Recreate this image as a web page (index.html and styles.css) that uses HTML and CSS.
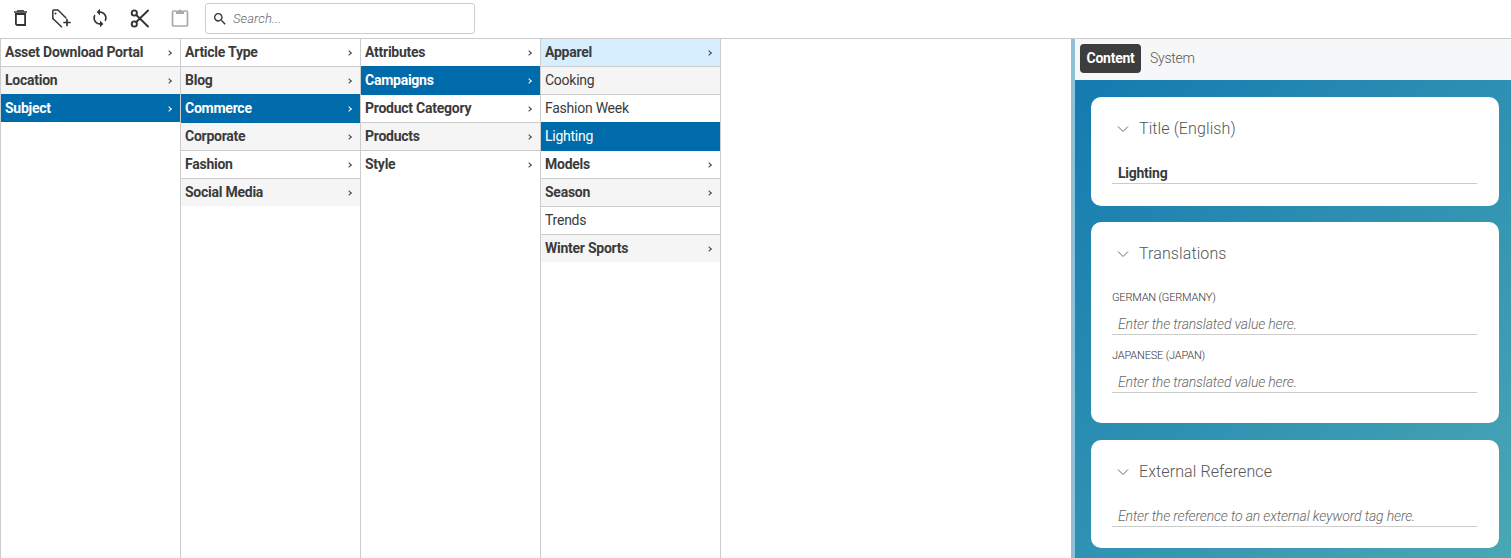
FILE: index.html
```html
<!DOCTYPE html>
<html lang="en">
<head>
<meta charset="utf-8">
<title>Keywords</title>
<link rel="stylesheet" href="styles.css">
</head>
<body>
<div class="app">
  <header class="toolbar">
    <div class="tools">
      <button class="tool"><svg viewBox="0 0 24 24" width="24" height="24" fill="none" stroke="#333" stroke-width="1.800"><path d="M7.900 8h9.200v11H9.400a1.500 1.500 0 0 1-1.500-1.500z"/><path d="M6 6h13" stroke-width="1.500"/><path d="M9 4.800h7" stroke-width="1.300"/></svg></button>
      <button class="tool"><svg viewBox="0 0 24 24" width="24" height="24" fill="none" stroke="#333" stroke-width="1.500" stroke-linejoin="round" stroke-linecap="round"><path d="M4.800 12.500V5a1 1 0 0 1 1-1H10l8 8"/><path d="M4.800 12.500l8.700 8.300"/><circle cx="7.500" cy="7.500" r="1" fill="#333" stroke="none"/><path d="M19 13.500v6M16 16.500h6" stroke-width="1.700"/></svg></button>
      <button class="tool"><svg viewBox="0 0 24 24" width="24" height="24"><path fill="#333" transform="translate(12 12) scale(.84) translate(-12 -12)" d="M12 4V1L8 5l4 4V6c3.300 0 6 2.700 6 6 0 1-.25 2-.7 2.800l1.460 1.460A7.900 7.900 0 0 0 20 12c0-4.420-3.580-8-8-8zm0 14c-3.300 0-6-2.700-6-6 0-1 .25-2 .7-2.800L5.240 7.740A7.900 7.900 0 0 0 4 12c0 4.420 3.580 8 8 8v3l4-4-4-4z"/></svg></button>
      <button class="tool"><svg viewBox="0 0 24 24" width="24" height="24" fill="none" stroke="#333" stroke-width="1.900"><circle cx="6.300" cy="7" r="2.600"/><circle cx="6.300" cy="18" r="2.600"/><path d="M8.300 9 20 20.500M8.300 16 20 4.500" stroke-linecap="round"/></svg></button>
      <button class="tool"><svg viewBox="0 0 24 24" width="24" height="24" fill="none" stroke="#aaa" stroke-width="1.700"><path d="M8 5H5.500a1 1 0 0 0-1 1v13a1 1 0 0 0 1 1h13a1 1 0 0 0 1-1V6a1 1 0 0 0-1-1H16"/><path d="M8 4.500h2.500a1.600 1.600 0 0 1 3 0H16V8H8z" fill="#aaa" stroke="none"/></svg></button>
    </div>
    <label class="search">
      <svg viewBox="0 0 24 24" width="16" height="16"><path fill="#333" d="M15.500 14h-.79l-.28-.27A6.471 6.471 0 0 0 16 9.500 6.500 6.500 0 1 0 9.500 16c1.610 0 3.090-.59 4.230-1.570l.27.28v.79l5 4.990L20.490 19l-4.990-5zm-6 0C7.010 14 5 11.990 5 9.500S7.010 5 9.500 5 14 7.010 14 9.500 11.990 14 9.500 14z"/></svg>
      <input class="search-input" type="text" placeholder="Search...">
    </label>
  </header>
  <main class="main">
    <div class="columns">
      <ul class="col">
        <li class="row parent"><span>Asset Download Portal</span><i class="chev"></i></li>
        <li class="row parent alt"><span>Location</span><i class="chev"></i></li>
        <li class="row parent sel"><span>Subject</span><i class="chev"></i></li>
      </ul>
      <ul class="col">
        <li class="row parent"><span>Article Type</span><i class="chev"></i></li>
        <li class="row parent alt"><span>Blog</span><i class="chev"></i></li>
        <li class="row parent sel"><span>Commerce</span><i class="chev"></i></li>
        <li class="row parent alt"><span>Corporate</span><i class="chev"></i></li>
        <li class="row parent"><span>Fashion</span><i class="chev"></i></li>
        <li class="row parent alt"><span>Social Media</span><i class="chev"></i></li>
      </ul>
      <ul class="col">
        <li class="row parent"><span>Attributes</span><i class="chev"></i></li>
        <li class="row parent sel"><span>Campaigns</span><i class="chev"></i></li>
        <li class="row parent"><span>Product Category</span><i class="chev"></i></li>
        <li class="row parent alt"><span>Products</span><i class="chev"></i></li>
        <li class="row parent"><span>Style</span><i class="chev"></i></li>
      </ul>
      <ul class="col col-last">
        <li class="row parent hl"><span>Apparel</span><i class="chev"></i></li>
        <li class="row alt"><span>Cooking</span></li>
        <li class="row"><span>Fashion Week</span></li>
        <li class="row sel"><span>Lighting</span></li>
        <li class="row parent"><span>Models</span><i class="chev"></i></li>
        <li class="row parent alt"><span>Season</span><i class="chev"></i></li>
        <li class="row"><span>Trends</span></li>
        <li class="row parent alt"><span>Winter Sports</span><i class="chev"></i></li>
      </ul>
    </div>
    <aside class="panel">
      <nav class="tabs">
        <span class="tab active">Content</span>
        <span class="tab">System</span>
      </nav>
      <div class="cards">
        <section class="card card-title">
          <h2 class="card-head"><svg viewBox="0 0 12 8" width="12" height="8" fill="none" stroke="#666" stroke-width="1"><path d="M1 1.500 6 6.500 11 1.500"/></svg>Title (English)</h2>
          <div class="field value">Lighting</div>
        </section>
        <section class="card card-trans">
          <h2 class="card-head"><svg viewBox="0 0 12 8" width="12" height="8" fill="none" stroke="#666" stroke-width="1"><path d="M1 1.500 6 6.500 11 1.500"/></svg>Translations</h2>
          <div class="label first">GERMAN (GERMANY)</div>
          <div class="field hint">Enter the translated value here.</div>
          <div class="label">JAPANESE (JAPAN)</div>
          <div class="field hint">Enter the translated value here.</div>
        </section>
        <section class="card card-ext">
          <h2 class="card-head"><svg viewBox="0 0 12 8" width="12" height="8" fill="none" stroke="#666" stroke-width="1"><path d="M1 1.500 6 6.500 11 1.500"/></svg>External Reference</h2>
          <div class="field hint">Enter the reference to an external keyword tag here.</div>
        </section>
      </div>
    </aside>
  </main>
</div>
</body>
</html>
```
FILE: styles.css
```css
* { box-sizing: border-box; }
html, body { margin: 0; height: 100%; overflow: hidden; }
body { font-family: Roboto, "Liberation Sans", sans-serif; color: #3b3b3b; background: #fff; font-size: 14px; }
.app { display: flex; flex-direction: column; height: 558px; }
.toolbar { display: flex; align-items: flex-start; height: 39px; flex: none; border-bottom: 1px solid #ccc; padding: 3px 0 0 8px; }
.tools { display: flex; gap: 16px; padding-top: 3px; margin-right: 13px; }
.tool { width: 24px; height: 24px; padding: 0; border: 0; background: none; display: block; }
.tool svg { display: block; }
.search { display: flex; align-items: center; gap: 5px; width: 270px; height: 31px; border: 1px solid #ccc; border-radius: 3px; padding-left: 6px; }
.search-input { border: 0; outline: 0; padding: 0; font: italic 300 13px Roboto, sans-serif; letter-spacing: .1px; width: 200px; color: #333; }
.search-input::placeholder { color: #666; opacity: 1; }
.main { flex: 1; display: flex; min-height: 0; }
.columns { flex: 1; display: flex; }
.col { list-style: none; margin: 0; padding: 0; width: 180px; border-left: 1px solid #ccc; }
.col-last { width: 181px; border-right: 1px solid #ccc; }
.row { display: flex; justify-content: space-between; align-items: center; height: 28px; padding: 0 7px 0 4px; border-bottom: 1px solid #ccc; font-size: 14px; letter-spacing: -.25px; line-height: 27px; color: #3b3b3b; }
.row:last-child { border-bottom: 0; height: 27px; }
.parent { font-weight: 700; }
.alt { background: #f5f5f5; }
.hl { background: #d6eefd; }
.sel { background: #006bab; color: #fff; border-bottom-color: #006bab; box-shadow: 0 -1px 0 #006bab; position: relative; }
.chev { width: 4px; height: 4px; border-top: 1px solid #444; border-right: 1px solid #444; transform: rotate(45deg); margin-right: 2px; }
.sel .chev { border-color: #fff; }
.panel { width: 440px; flex: none; border-left: 4px solid #8fc0d6; display: flex; flex-direction: column; }
.tabs { height: 41px; flex: none; background: #f6f7f9; display: flex; align-items: center; padding: 0 0 2px 5px; gap: 9px; font-size: 14px; letter-spacing: -.25px; }
.tab { color: #555; font-weight: 300; line-height: 29px; }
.tab.active { background: #3d3d3d; color: #fff; font-weight: 700; border-radius: 4px; padding: 0 6.500px; }
.cards { flex: 1; background: linear-gradient(135deg, #147bb0 0%, #4aa7b4 100%); padding: 17px 12px 0 16px; display: flex; flex-direction: column; gap: 16px; }
.card { background: #fff; border-radius: 10px; padding: 0 22px 0 21px; flex: none; }
.card-title { height: 109px; }
.card-trans { height: 201px; }
.card-ext { height: 108px; margin-top: 1px; }
.card-head { margin: 0; display: flex; align-items: center; gap: 10px; padding: 21px 0 0 5px; height: 42px; font-size: 16px; font-weight: 300; color: #555; letter-spacing: .1px; }
.field { height: 24px; line-height: 24px; padding-left: 6px; border-bottom: 1px solid #ccc; }
.value { font-weight: 700; margin-top: 23px; height: 22px; line-height: 22px; color: #3b3b3b; font-size: 14px; letter-spacing: -.25px; }
.hint { font-style: italic; font-weight: 300; color: #666; font-size: 14px; letter-spacing: -.15px; height: 23px; line-height: 25px; }
.card-ext .hint { margin-top: 22px; }
.label { font-size: 11px; letter-spacing: -.18px; font-weight: 300; color: #333; line-height: 12px; margin-top: 15px; }
.label.first { margin-top: 28px; }
.card-trans .hint { margin-top: 8px; }
```
